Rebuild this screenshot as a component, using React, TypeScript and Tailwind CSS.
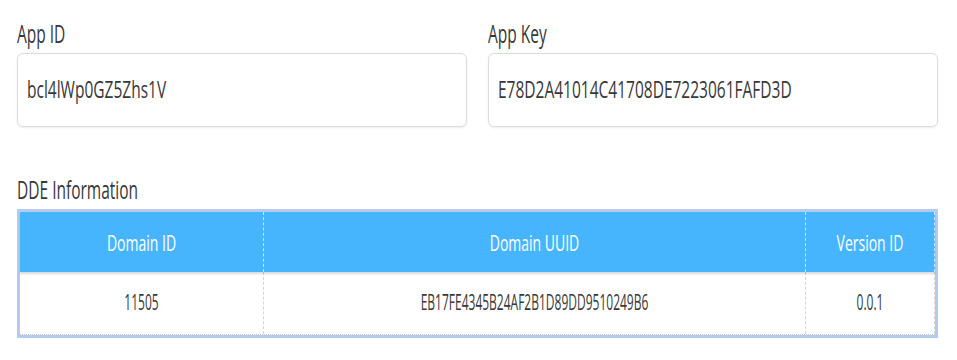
import type { ReactNode } from 'react'

// the reference text is tall and narrow, so glyphs are stretched vertically
function Tall({ children, className = '' }: { children: ReactNode; className?: string }) {
  return <span className={`inline-block ${className}`}>{children}</span>
}

const font = { fontFamily: '"Open Sans", "Noto Sans", sans-serif' }

function Field({ label, value }: { label: string; value: string }) {
  return (
    <div className="flex flex-col">
      <div className="h-[53px] pt-[23px]">
        <div className="h-[20px] leading-[20px] text-[15.5px] text-[#383838]">
          <Tall className="scale-y-[1.65] origin-center">{label}</Tall>
        </div>
      </div>
      <div className="h-[74px] rounded-[6px] border border-[#dcdcdc] shadow-[0_1px_2px_rgba(0,0,0,0.08)] flex items-center px-[9px] text-[15.5px] text-[#383838]">
        <Tall className="scale-y-[1.5]">{value}</Tall>
      </div>
    </div>
  )
}

export default function App() {
  return (
    <div className="w-[957px] h-[360px] bg-white pl-[17px] pr-[19px] overflow-hidden" style={font}>
      <div className="grid grid-cols-2 gap-[21px]">
        <Field label="App ID" value="bcl4lWp0GZ5Zhs1V" />
        <Field label="App Key" value="E78D2A41014C41708DE7223061FAFD3D" />
      </div>

      <div className="mt-[52px] h-[20px] leading-[20px] text-[15.5px] text-[#383838]">
        <Tall className="scale-y-[1.65]">DDE Information</Tall>
      </div>

      <div className="mt-[10px] border-[3px] border-[#b3cbee]">
        <div className="relative z-10 grid grid-cols-[244px_542px_1fr] h-[60px] bg-[#47b5fe] text-white text-[14px] shadow-[0_2px_2px_rgba(0,0,0,0.15)]">
          <div className="flex items-center justify-center border-r border-dashed border-[#cfe6fb]">
            <Tall className="scale-y-[1.5]">Domain ID</Tall>
          </div>
          <div className="flex items-center justify-center border-r border-dashed border-[#cfe6fb]">
            <Tall className="scale-y-[1.5]">Domain UUID</Tall>
          </div>
          <div className="flex items-center justify-center border-r border-dashed border-[#cfe6fb]">
            <Tall className="scale-y-[1.5]">Version ID</Tall>
          </div>
        </div>
        <div className="grid grid-cols-[244px_542px_1fr] h-[63px] text-[12px] text-[#383838] border-b border-dotted border-[#c8c8c8]">
          <div className="flex items-center justify-center border-r border-dashed border-[#d4d4d4]">
            <Tall className="scale-y-[1.75]">11505</Tall>
          </div>
          <div className="flex items-center justify-center border-r border-dashed border-[#d4d4d4]">
            <Tall className="scale-y-[1.75]">EB17FE4345B24AF2B1D89DD9510249B6</Tall>
          </div>
          <div className="flex items-center justify-center border-r border-dashed border-[#d4d4d4]">
            <Tall className="scale-y-[1.75]">0.0.1</Tall>
          </div>
        </div>
      </div>
    </div>
  )
}
